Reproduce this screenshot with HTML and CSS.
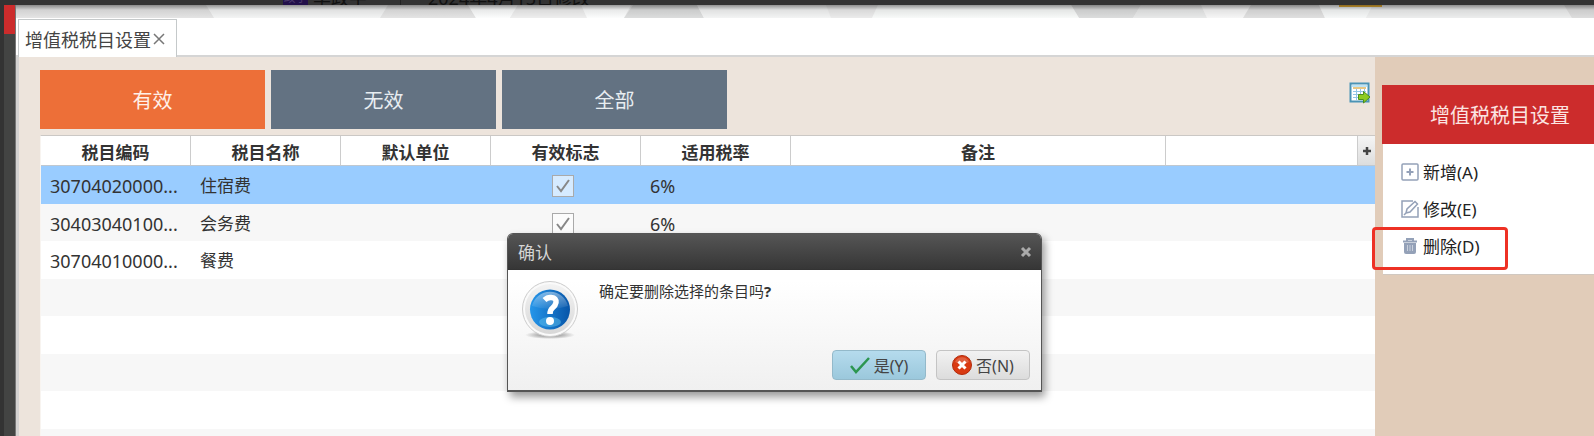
FILE: index.html
```
<!DOCTYPE html>
<html lang="zh-CN">
<head>
    <meta charset="UTF-8">
    <meta name="viewport" content="width=device-width, initial-scale=1.0">
    <title>增值税税目设置</title>
    <link rel="stylesheet" href="styles.css">
</head>
<body>
    <div class="topbar">
        <span class="avatar">政宇</span>
        <span class="author">李政宇</span>
        <span class="modified">2024年4月15日修改</span>
    </div>
    <div class="app">
        <div class="sidebar"><div class="sidebar-mark"></div></div>
        <div class="main">
            <div class="banner">
                <svg width="100%" height="13" aria-hidden="true">
                    <path fill="#f3f4f4" d="M190 0h260l10 13H198z"/>
                    <path fill="#e4e4e4" d="M190 0h-190v13h198zM372 0h80l8 13h-96z"/>
                    <path fill="#fcfdfd" d="M452 0h50l-8 13h-34zM565 0h50l-7 13h-38z"/>
                    <path fill="#eeeeee" d="M502 0h63l6 13h-77z"/>
                    <path fill="#dcdddd" d="M617 0h64l7 13h-80zM1055 0h70l-8 13h-54z"/>
                    <path fill="#f3f4f4" d="M681 0h134l5 13H688z"/>
                    <path fill="#ebebeb" d="M810 0h52l-6 13h-41z"/>
                    <path fill="#f8faf9" d="M862 0h193l8 13H856z"/>
                    <path fill="#e8e9e9" d="M1125 0h60l6 13h-74z"/>
                    <path fill="#f6f6f6" d="M1185 0h50l-8 13h-36z"/>
                    <path fill="#dfdfdf" d="M1235 0h68l6 13h-82z"/>
                    <path fill="#f6f8f8" d="M1303 0h54l-7 13h-41z"/>
                    <path fill="#eceded" d="M1357 0h191l8 13h-206z"/>
                    <path fill="#dddddd" d="M1548 0h60v13h-52z"/>
                    <path fill="#e9b035" d="M1323 0h43v2h-43z"/>
                </svg>
            </div>
            <div class="tabs">
                <div class="tab">
                    <span>增值税税目设置</span>
                    <button class="tab-close" aria-label="关闭">
                        <svg width="12" height="12" viewBox="0 0 12 12"><path d="M1 1l10 10M11 1L1 11" stroke="#777" stroke-width="1.5"/></svg>
                    </button>
                </div>
            </div>
            <div class="content">
                <div class="list">
                    <div class="toolbar">
                        <button class="filter active">有效</button>
                        <button class="filter">无效</button>
                        <button class="filter">全部</button>
                        <button class="export" aria-label="导出">
                            <svg width="22" height="22" viewBox="0 0 22 22">
                                <rect x="1.5" y="1.5" width="18" height="18" fill="#fff" stroke="#4b93b5" stroke-width="2"/>
                                <path d="M3 3h15v2H3z" fill="#bde3f4"/>
                                <path d="M4 6h13" stroke="#e2b45a" stroke-width="1.5"/>
                                <path d="M4 9.500h13M4 12.500h13M4 15.500h8M7.500 7v11M11.500 7v11M15.500 7v5" stroke="#93c5e6"/>
                                <path d="M9.500 12.500h5V9.500l6.500 5.500-6.500 6v-3.500h-5z" fill="#8ecb1f" stroke="#4c8f1b"/>
                            </svg>
                        </button>
                    </div>
                    <table class="grid">
                        <colgroup>
                            <col class="col"><col class="col"><col class="col"><col class="col"><col class="col">
                            <col class="col-remark"><col><col class="col-add">
                        </colgroup>
                        <thead>
                            <tr>
                                <th>税目编码</th>
                                <th>税目名称</th>
                                <th>默认单位</th>
                                <th>有效标志</th>
                                <th>适用税率</th>
                                <th>备注</th>
                                <th></th>
                                <th class="add">
                                    <button aria-label="选择列"><svg width="10" height="10" viewBox="0 0 10 10"><path d="M5 1v8M1 5h8" stroke="#444" stroke-width="2.500"/></svg></button>
                                </th>
                            </tr>
                        </thead>
                        <tbody>
                            <tr class="selected">
                                <td class="num">30704020000...</td>
                                <td>住宿费</td>
                                <td></td>
                                <td class="flag"><input type="checkbox" aria-label="有效标志" checked disabled></td>
                                <td class="num">6%</td>
                                <td colspan="3"></td>
                            </tr>
                            <tr>
                                <td class="num">30403040100...</td>
                                <td>会务费</td>
                                <td></td>
                                <td class="flag"><input type="checkbox" aria-label="有效标志" checked disabled></td>
                                <td class="num">6%</td>
                                <td colspan="3"></td>
                            </tr>
                            <tr>
                                <td class="num">30704010000...</td>
                                <td>餐费</td>
                                <td colspan="6"></td>
                            </tr>
                            <tr><td colspan="8"></td></tr>
                            <tr><td colspan="8"></td></tr>
                            <tr><td colspan="8"></td></tr>
                            <tr><td colspan="8"></td></tr>
                            <tr><td colspan="8"></td></tr>
                        </tbody>
                    </table>
                </div>
                <div class="side">
                    <h2>增值税税目设置</h2>
                    <div class="menu">
                        <a href="#">
                            <svg width="18" height="18" viewBox="0 0 18 18" fill="none" stroke="#94a1b8"><rect x="1" y="1" width="16" height="16" rx="1" stroke-width="1.500"/><path d="M9 5.500v7M5.500 9h7" stroke-width="2"/></svg>
                            新增(A)
                        </a>
                        <a href="#">
                            <svg width="18" height="18" viewBox="0 0 18 18" fill="none" stroke="#94a1b8" stroke-width="1.500"><path d="M12 1H1v16h16V7"/><path d="M5 13l1-4 8-7.500 2.500 2.500L9 12zM3 15l3-3"/></svg>
                            修改(E)
                        </a>
                        <a href="#" class="marked">
                            <svg width="18" height="18" viewBox="0 0 18 18"><path d="M3 6h12v9q0 2-2 2H5q-2 0-2-2z" fill="#94a1b8"/><path d="M2 4.500h14M6 4V2h6v2" fill="none" stroke="#94a1b8" stroke-width="2"/><path d="M6.500 8v6M9 8v6M11.500 8v6" stroke="#c9d0dc"/></svg>
                            删除(D)
                        </a>
                    </div>
                </div>
            </div>
        </div>
    </div>

    <div class="dialog" role="dialog" aria-labelledby="dialog-title">
        <div class="dialog-header">
            <span id="dialog-title">确认</span>
            <button class="dialog-close" aria-label="关闭">
                <svg width="12" height="12" viewBox="0 0 12 12"><path d="M2 2l8 8M10 2l-8 8" stroke="#aaa" stroke-width="3"/></svg>
            </button>
        </div>
        <div class="dialog-body">
            <svg class="question" width="58" height="58" viewBox="0 0 58 58">
                <defs>
                    <linearGradient id="ring" x1="0" y1="0" x2="0" y2="1"><stop offset="0" stop-color="#f3f3f3"/><stop offset="1" stop-color="#d8d8d8"/></linearGradient>
                    <linearGradient id="ball" x1="0" y1="0" x2="1" y2="0"><stop offset="0" stop-color="#2596ea"/><stop offset="1" stop-color="#0755a8"/></linearGradient>
                    <linearGradient id="shine" x1="0" y1="0" x2="0" y2="1"><stop offset="0" stop-color="#fff" stop-opacity=".45"/><stop offset="1" stop-color="#fff" stop-opacity=".05"/></linearGradient>
                    <radialGradient id="shade"><stop offset="0" stop-color="#777"/><stop offset="1" stop-color="#777" stop-opacity="0"/></radialGradient>
                </defs>
                <ellipse cx="29" cy="54" rx="25" ry="4" fill="url(#shade)"/>
                <circle cx="29" cy="28" r="27.500" fill="#fafafa" stroke="#ccc"/>
                <circle cx="29" cy="28" r="25" fill="url(#ring)"/>
                <circle cx="29" cy="28.500" r="20" fill="url(#ball)"/>
                <path d="M11 25a18.500 18.500 0 0 1 36 0q-18 6-36 0z" fill="url(#shine)"/>
                <ellipse cx="29" cy="41" rx="11" ry="5" fill="#5fc1ee" opacity=".5"/>
                <path d="M23.500 19q3-3 7-2.500 5 .5 4.500 5-.5 3-3.500 5.500-2.500 2-2.500 6" fill="none" stroke="#fff" stroke-width="5.500"/>
                <circle cx="29" cy="40" r="4" fill="#fff"/>
            </svg>
            <p>确定要删除选择的条目吗<b>?</b></p>
        </div>
        <div class="dialog-actions">
            <button class="btn btn-yes">
                <svg width="20" height="18" viewBox="0 0 20 18"><path d="M1 10l5 6L19 2" fill="none" stroke="#2c9650" stroke-width="2.500"/></svg>
                是(Y)
            </button>
            <button class="btn">
                <svg width="20" height="20" viewBox="0 0 20 20"><circle cx="10" cy="10" r="9.500" fill="#d93a12" stroke="#b22c0c"/><path d="M3 7a7.500 7.500 0 0 1 14 0q-7 4-14 0z" fill="#fff" opacity=".2"/><path d="M6.500 6.500l7 7M13.500 6.500l-7 7" stroke="#fff" stroke-width="3"/></svg>
                否(N)
            </button>
        </div>
    </div>
</body>
</html>
```
FILE: styles.css
```
*, *::before, *::after {
    box-sizing: border-box;
}
body {
    margin: 0;
    height: 100vh;
    overflow: hidden;
    display: flex;
    flex-direction: column;
    position: relative;
    background: #333;
    color: #333;
    font-family: "Noto Sans", "Noto Sans CJK SC", sans-serif;
    font-size: 17px;
}
button {
    font-family: inherit;
    padding: 0;
    border: 0;
    background: none;
}
svg {
    display: block;
    flex: none;
}

/* dimmed strip above the window */
.topbar {
    flex: none;
    height: 5px;
    overflow: hidden;
    display: flex;
    align-items: flex-end;
    padding-left: 283px;
    font-size: 18px;
    line-height: 14px;
    white-space: nowrap;
    color: #111;
}
.avatar {
    width: 25px;
    background: #22104a;
    color: #4a3a6c;
    font-size: 12px;
    text-align: center;
}
.author {
    width: 93px;
    padding-left: 5px;
    border-right: 1px solid #222;
}
.modified {
    padding-left: 27px;
}

.app {
    flex: 1;
    min-height: 0;
    display: flex;
}
.sidebar {
    width: 16px;
    padding-left: 4px;
    background: linear-gradient(90deg, #333 4px, #434443 4px);
    border-right: 1px solid #777;
}
.sidebar-mark {
    height: 29px;
    background: #cc2c2c;
}
.main {
    flex: 1;
    min-width: 0;
    display: flex;
    flex-direction: column;
    background: #fff;
}
.banner {
    flex: none;
    height: 13px;
    position: relative;
    background: #eee;
}
.banner::after {
    content: "";
    position: absolute;
    inset: 0;
    background: linear-gradient(rgba(0, 0, 0, 0.4), rgba(0, 0, 0, 0.08) 5px, transparent);
}

.tabs {
    flex: none;
    height: 39px;
    padding: 1px 0 0 2px;
    border-bottom: 2px solid #d5d5d5;
}
.tab {
    width: 159px;
    height: 38px;
    display: flex;
    align-items: center;
    gap: 2px;
    padding-left: 6px;
    border: 1px solid #c5c9ca;
    border-bottom: 0;
    background: #fff;
    color: #444;
    font-size: 18px;
    white-space: nowrap;
}

.content {
    flex: 1;
    min-height: 0;
    display: flex;
    border-left: 3px solid #d4d2d1;
    background: #ede4dc;
}
.list {
    flex: 1;
    min-width: 0;
    overflow: hidden;
    padding: 13px 0 0 21px;
}
.toolbar {
    display: flex;
    gap: 6px;
    margin-bottom: 6px;
}
.filter {
    width: 225px;
    height: 59px;
    background: #637282;
    color: #e8edf1;
    font-size: 20px;
}
.filter.active {
    background: #ed6f38;
    color: #fff0e8;
}
.export {
    margin: 12px 4px 0 auto;
    align-self: flex-start;
}

.grid {
    width: 100%;
    table-layout: fixed;
    border-collapse: separate;
    border-spacing: 0;
    border-top: 1px solid #cbc8c5;
    border-left: 1px solid #f8f4f0;
    background: #fff;
}
.col {
    width: 150px;
}
.col-remark {
    width: 375px;
}
.col-add {
    width: 17px;
}
.grid th {
    height: 30px;
    padding: 4px 0 0;
    border-right: 1px solid #ccc;
    border-bottom: 1px solid #c0c8d0;
    line-height: 20px;
}
.grid .add {
    padding: 0;
    border-right: 0;
    background: linear-gradient(#f5f5f5, #ddd);
}
.add button {
    display: block;
    margin: 0 auto;
}
.grid td {
    height: 37px;
    padding: 2px 0 0 9px;
    line-height: 24px;
    white-space: nowrap;
}
.grid tr:nth-child(odd) td {
    height: 38px;
}
.grid tr:nth-child(even) td {
    background: #f7f7f7;
}
.grid tr.selected td {
    background: #99ccff;
}
.grid .num {
    font-size: 18px;
}
.grid .flag {
    padding: 2px 0 0;
}
.flag input {
    appearance: none;
    display: block;
    width: 22px;
    height: 22px;
    margin: 0 0 0 61px;
    border: 1px solid #aaa;
    background: rgba(255, 255, 255, 0.6) url("data:image/svg+xml,%3Csvg xmlns='http://www.w3.org/2000/svg' viewBox='0 0 20 20'%3E%3Cpath d='M4 10l4 5L16 4' fill='none' stroke='%23888' stroke-width='2'/%3E%3C/svg%3E");
}

.side {
    width: 219px;
    padding: 28px 0 0 7px;
    background: #e1ccb9;
}
.side h2 {
    margin: 0;
    height: 59px;
    padding-left: 48px;
    background: #cc2c2c;
    color: #fbe4e2;
    font-size: 20px;
    font-weight: normal;
    line-height: 61px;
    white-space: nowrap;
}
.menu {
    margin-left: 1px;
    padding: 9px 0 10px 18px;
    border-bottom: 1px solid #d0c8c0;
    background: #fff;
}
.menu a {
    position: relative;
    display: flex;
    align-items: center;
    gap: 4px;
    height: 37px;
    color: #222;
    text-decoration: none;
}
.marked::after {
    content: "";
    position: absolute;
    left: -29px;
    top: 0;
    width: 136px;
    height: 43px;
    border: 3px solid #ee3124;
    border-radius: 4px;
}

.dialog {
    position: absolute;
    left: 507px;
    top: 233px;
    width: 535px;
    height: 159px;
    display: flex;
    flex-direction: column;
    border: 1px solid #555;
    border-bottom-width: 2px;
    border-radius: 6px 6px 0 0;
    background: linear-gradient(#fff 30%, #f0f0f0);
    box-shadow: 3px 5px 8px rgba(0, 0, 0, 0.4);
}
.dialog-header {
    height: 36px;
    display: flex;
    align-items: center;
    justify-content: space-between;
    padding: 0 9px 0 10px;
    border-bottom: 1px solid #333;
    border-radius: 5px 5px 0 0;
    background: linear-gradient(#555, #363636);
    color: #d5d5d5;
}
.dialog-body {
    flex: 1;
    display: flex;
    gap: 20px;
    padding: 11px 0 0 13px;
}
.dialog-body p {
    margin: 0;
    font-size: 15px;
    line-height: 20px;
}
.dialog-actions {
    display: flex;
    justify-content: flex-end;
    gap: 10px;
    padding: 0 11px 10px 0;
}
.btn {
    width: 94px;
    height: 30px;
    display: flex;
    align-items: center;
    justify-content: center;
    gap: 4px;
    border: 1px solid #c4c4c4;
    border-radius: 4px;
    background: linear-gradient(#f2f2f2, #dcdcdc);
    color: #444;
    font-size: 16px;
}
.btn-yes {
    border-color: #93b9ca;
    background: linear-gradient(#b5dbed, #9bc8dc);
}
```
